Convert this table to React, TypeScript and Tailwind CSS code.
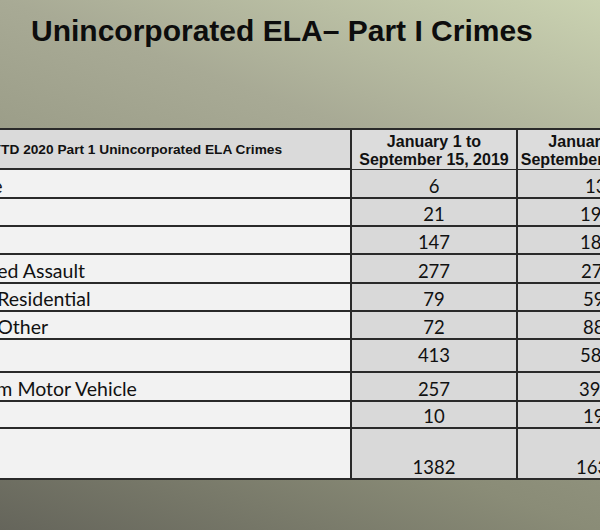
import React from "react";

type Row = {
  label: string;
  y2019: string;
  y2020: string;
  pad: string; // left offset of the clipped 2020 figure
  h: string;
  extra?: string;
};

const rows: Row[] = [
  { label: "Homicide", y2019: "6", y2020: "13", pad: "pl-[67px]", h: "h-[29px]" },
  { label: "Rape", y2019: "21", y2020: "19", pad: "pl-[62px]", h: "h-[28px]" },
  { label: "Robbery", y2019: "147", y2020: "18", pad: "pl-[62px]", h: "h-[28px]" },
  { label: "Aggravated Assault", y2019: "277", y2020: "27", pad: "pl-[63px]", h: "h-[29px]" },
  { label: "Burglary Residential", y2019: "79", y2020: "59", pad: "pl-[65px]", h: "h-[28px]" },
  { label: "Burglary Other", y2019: "72", y2020: "88", pad: "pl-[65px]", h: "h-[28px]" },
  { label: "Larceny", y2019: "413", y2020: "58", pad: "pl-[62px]", h: "h-[33px]", extra: "pb-[5px]" },
  { label: "Theft from Motor Vehicle", y2019: "257", y2020: "39", pad: "pl-[61px]", h: "h-[29px]" },
  { label: "Arson", y2019: "10", y2020: "19", pad: "pl-[65px]", h: "h-[27px]" },
  { label: "Total", y2019: "1382", y2020: "163", pad: "pl-[58px]", h: "h-[51px]" },
];

const font = "font-['Lato','Open_Sans',sans-serif] leading-[22px] text-[#111]";

export default function App() {
  return (
    <div className="w-[600px] h-[530px] overflow-hidden bg-[linear-gradient(20deg,#65655b_0%,#8a8c77_29%,#a8aa95_71%,#cad2b1_100%)]">
      {/* Slide title */}
      <h1 className="pt-[16px] pl-[31px] font-['Liberation_Sans',Arial,sans-serif] text-[30px] leading-[30px] font-bold text-[#0d0d0d] whitespace-nowrap">
        Unincorporated ELA– Part I Crimes
      </h1>

      {/* Table, cropped on both sides */}
      <div className="mt-[82px] ml-[-76px] w-[794px] border-t-2 border-[#2a2a2a]">
        <div className="flex h-[40px] border-b-2 border-[#2a2a2a] font-['Liberation_Sans',Arial,sans-serif] font-bold text-[#111] bg-[#dadada]">
          <div className="w-[428px] shrink-0 border-r-2 border-[#2a2a2a] flex items-center justify-center pt-[3px] text-[13.7px] whitespace-nowrap">
            YTD 2020 Part 1 Unincorporated ELA Crimes
          </div>
          <div className="w-[166px] shrink-0 border-r-2 border-[#2a2a2a] flex flex-col items-center justify-end text-[16px] leading-[18px] mb-[-1px] bg-[#dcdcdc]">
            <span>January 1 to</span>
            <span className="whitespace-nowrap">September 15, 2019</span>
          </div>
          <div className="w-[155px] shrink-0 flex flex-col items-center justify-end text-[16px] leading-[18px] mb-[-1px] bg-[#dcdcdc]">
            <span>January 1 to</span>
            <span className="whitespace-nowrap">September 15, 2020</span>
          </div>
        </div>

        {rows.map((r) => (
          <div key={r.label} className={`flex border-b-2 border-[#2a2a2a] ${r.h} ${font}`}>
            <div className="w-[428px] shrink-0 border-r-2 border-[#2a2a2a] bg-[#f2f2f2] flex items-end text-[19.5px] whitespace-nowrap">
              <span className="ml-[-3px]">{r.label}</span>
            </div>
            <div className={`w-[166px] shrink-0 border-r-2 border-[#2a2a2a] bg-[#d9d9d9] flex items-end justify-center text-[18.5px] ${r.extra ?? ""}`}>
              {r.y2019}
            </div>
            <div className={`flex-1 bg-[#d9d9d9] flex items-end text-[18.5px] ${r.pad} ${r.extra ?? ""}`}>{r.y2020}</div>
          </div>
        ))}
      </div>
    </div>
  );
}
